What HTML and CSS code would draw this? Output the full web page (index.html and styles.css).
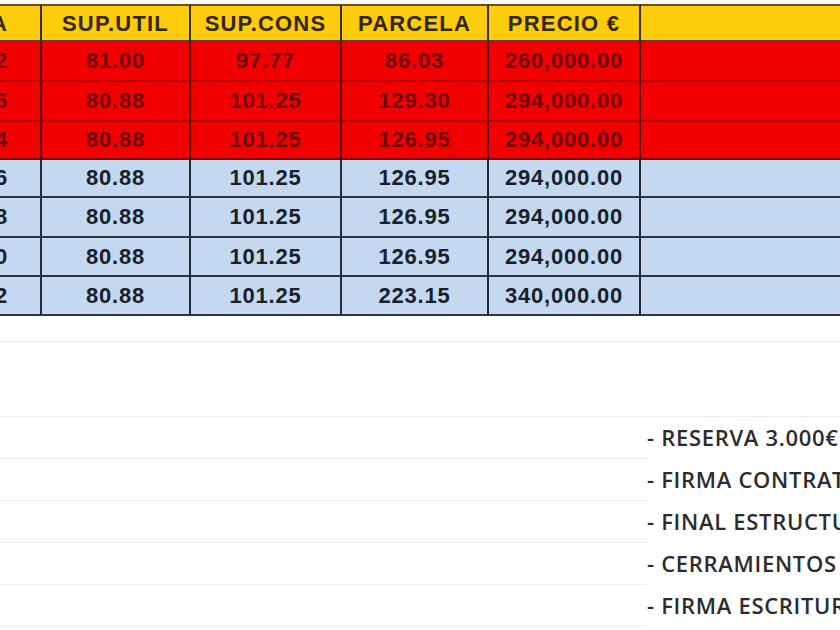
FILE: index.html
```html
<!DOCTYPE html>
<html lang="es">
<head>
<meta charset="utf-8">
<title>Precios</title>
<link rel="stylesheet" href="styles.css">
</head>
<body>
<div class="page">
  <div class="sheet">
    <div class="c h c0">VIVIENDA</div>
    <div class="c h">SUP.UTIL</div>
    <div class="c h">SUP.CONS</div>
    <div class="c h">PARCELA</div>
    <div class="c h">PRECIO €</div>
    <div class="c h last"></div>

    <div class="c r c0 t40">V-2</div>
    <div class="c r t40">81.00</div>
    <div class="c r t40">97.77</div>
    <div class="c r t40">86.03</div>
    <div class="c r t40">260,000.00</div>
    <div class="c r last t40"></div>

    <div class="c r c0 t40">V-6</div>
    <div class="c r t40">80.88</div>
    <div class="c r t40">101.25</div>
    <div class="c r t40">129.30</div>
    <div class="c r t40">294,000.00</div>
    <div class="c r last t40"></div>

    <div class="c r c0 t38 rend">V-4</div>
    <div class="c r t38 rend">80.88</div>
    <div class="c r t38 rend">101.25</div>
    <div class="c r t38 rend">126.95</div>
    <div class="c r t38 rend">294,000.00</div>
    <div class="c r last t38 rend"></div>

    <div class="c b c0 t38">V-6</div>
    <div class="c b t38">80.88</div>
    <div class="c b t38">101.25</div>
    <div class="c b t38">126.95</div>
    <div class="c b t38">294,000.00</div>
    <div class="c b last t38"></div>

    <div class="c b c0 t40">V-8</div>
    <div class="c b t40">80.88</div>
    <div class="c b t40">101.25</div>
    <div class="c b t40">126.95</div>
    <div class="c b t40">294,000.00</div>
    <div class="c b last t40"></div>

    <div class="c b c0 t39">V-10</div>
    <div class="c b t39">80.88</div>
    <div class="c b t39">101.25</div>
    <div class="c b t39">126.95</div>
    <div class="c b t39">294,000.00</div>
    <div class="c b last t39"></div>

    <div class="c b c0 t39">V-12</div>
    <div class="c b t39">80.88</div>
    <div class="c b t39">101.25</div>
    <div class="c b t39">223.15</div>
    <div class="c b t39">340,000.00</div>
    <div class="c b last t39"></div>
  </div>

  <div class="lower">
    <div class="grid-row g1"></div>
    <div class="grid-row g2"></div>
    <div class="item"><div class="blank"></div><div class="txt">- RESERVA 3.000€</div></div>
    <div class="item"><div class="blank"></div><div class="txt">- FIRMA CONTRATO</div></div>
    <div class="item"><div class="blank"></div><div class="txt">- FINAL ESTRUCTURA</div></div>
    <div class="item"><div class="blank"></div><div class="txt">- CERRAMIENTOS</div></div>
    <div class="item"><div class="blank"></div><div class="txt">- FIRMA ESCRITURA</div></div>
  </div>
</div>
</body>
</html>
```

FILE: styles.css
```css
html, body {
  margin: 0;
  padding: 0;
  background: #ffffff;
}

.page {
  width: 840px;
  height: 630px;
  overflow: hidden;
  position: relative;
  background: #ffffff;
}

.sheet {
  display: grid;
  grid-template-columns: 112px 149px 151px 147px 152px 320px;
  margin-left: -70px;
  margin-top: 4px;
  font-family: "Liberation Sans", Arial, sans-serif;
  font-weight: bold;
  font-size: 22px;
  letter-spacing: 0.8px;
}

.c {
  box-sizing: border-box;
  display: flex;
  align-items: center;
  justify-content: center;
  white-space: nowrap;
  border-right: 2px solid #2e2e2e;
  border-bottom: 2px solid #2e2e2e;
}

.c0 {
  justify-content: flex-end;
  padding-right: 32px;
}

.last {
  border-right: none;
}

.h {
  height: 38px;
  background: #fdcc0c;
  color: #33260a;
  border-top: 2px solid #6a5020;
  border-bottom: 2px solid #5a3a10;
  border-right-color: #3a2c14;
  letter-spacing: 1.2px;
  padding-top: 1px;
}

.r {
  background: #f20000;
  color: #6c0000;
  border-bottom-color: #b80000;
  border-right-color: #4a0a0a;
}

.rend {
  border-bottom-color: #8a0000;
}

.b {
  background: #c4d9ef;
  color: #18202c;
  border-bottom-color: #2f3440;
  border-right-color: #262a33;
}

.t40 { height: 40px; }
.t39 { height: 39px; }
.t38 { height: 38px; }

.lower {
  display: flex;
  flex-direction: column;
}

.grid-row {
  box-sizing: border-box;
  border-bottom: 1px solid #efefef;
}

.g1 { height: 26px; }
.g2 { height: 75px; }

.item {
  display: grid;
  grid-template-columns: 647px 1fr;
  height: 42px;
}

.blank {
  box-sizing: border-box;
  border-bottom: 1px solid #efefef;
}

.txt {
  display: flex;
  align-items: center;
  white-space: nowrap;
  overflow: hidden;
  font-family: "Open Sans", "Noto Sans", sans-serif;
  font-weight: 600;
  font-size: 22px;
  color: #2c2c2c;
  letter-spacing: 0.7px;
  padding-bottom: 2px;
}
```
